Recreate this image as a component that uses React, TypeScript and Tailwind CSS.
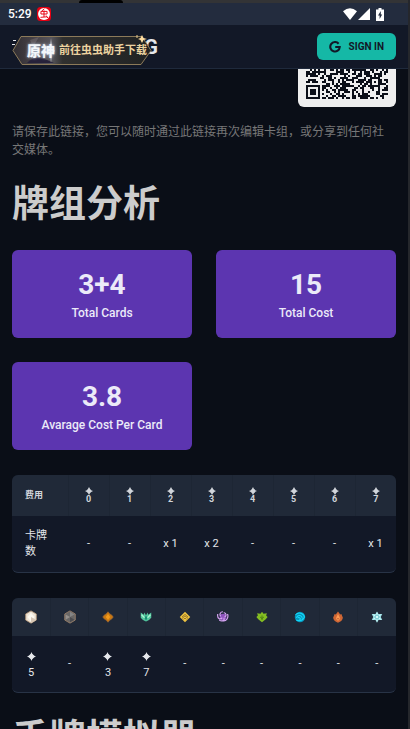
import React from "react";

const MODULES = 41;

function qrDark(x: number, y: number): boolean {
  const fy = y - 34;
  if (x < 8 && y >= 33) {
    if (x === 7 || fy < 0) return false;
    const edge = x === 0 || x === 6 || fy === 0 || fy === 6;
    const core = x >= 2 && x <= 4 && fy >= 2 && fy <= 4;
    return edge || core;
  }
  const ax = Math.abs(x - 34);
  const ay = Math.abs(y - 34);
  if (ay > 4 && y > 38 && x > 38) return false;
  if (Math.abs(x - 34) <= 2 && Math.abs(y - 32) <= 2) return Math.max(ax, Math.abs(y - 32)) !== 1;
  const n = Math.sin(x * 12.9898 + y * 78.233) * 43758.5453;
  return n - Math.floor(n) > 0.48;
}

function QrCode() {
  let d = "";
  for (let y = 0; y < MODULES; y++) {
    for (let x = 0; x < MODULES; x++) {
      if (qrDark(x, y)) d += `M${x} ${y}h1v1h-1z`;
    }
  }
  return (
    <svg viewBox="0 0 41 41" className="size-[82px]" shapeRendering="crispEdges" role="img" aria-label="QR">
      <path d={d} fill="#0b0f18" />
    </svg>
  );
}

function Star({ className }: { className: string }) {
  return (
    <svg viewBox="0 0 16 16" className={className} fill="currentColor" aria-hidden="true">
      <path d="M8 0Q9.500 6 16 8Q9.500 10 8 16Q6.500 10 0 8Q6.500 6 8 0Z" />
      <circle cx="8" cy="8" r="4" />
    </svg>
  );
}

function StatusBar() {
  return (
    <div className="flex h-[22px] shrink-0 items-center justify-between bg-[#232c3e] pl-2 pr-6">
      <div className="flex items-center gap-1">
        <span className="text-[12px] leading-5 font-medium text-white">5:29</span>
        <svg viewBox="0 0 16 16" className="ml-px size-[14px]" aria-hidden="true">
          <rect width="16" height="16" rx="4" fill="#e60012" />
          <circle cx="8" cy="8" r="6.800" fill="#fff" />
          <path d="M8.500 2L5.500 4.500M4.500 5h7v3h-7zM8 4v7.500M4 11.800l7.500-.6M10.500 9.800l2 3" stroke="#e60012" strokeWidth="1.100" fill="none" />
        </svg>
      </div>
      <div className="flex items-center text-white">
        <svg viewBox="0 0 14 12" className="h-3 w-[14px]" fill="currentColor" aria-hidden="true">
          <path d="M0 3.200Q7-2.800 14 3.200L7 12Z" />
        </svg>
        <svg viewBox="0 0 12 12" className="ml-px size-3" fill="currentColor" aria-hidden="true">
          <path d="M12 0V12H0Z" />
        </svg>
        <svg viewBox="0 0 8 13" className="ml-[6px] h-[13px] w-2" aria-hidden="true">
          <path d="M2.500 0h3v1.500H8V13H0V1.500h2.500z" fill="currentColor" />
          <path d="M4.800 3L2 7.600h1.600V11L6.200 6.500H4.800z" fill="#232c3e" />
        </svg>
      </div>
    </div>
  );
}

function PromoBadge() {
  return (
    <button
      type="button"
      className="absolute top-[10px] left-3 flex h-[31px] w-[140px] items-center pl-[15px] text-left"
    >
      <svg viewBox="0 0 140 31" className="absolute inset-0 h-[31px] w-[140px]" aria-hidden="true">
        <defs>
          <linearGradient id="plate" x1="0" y1="0" x2="1" y2="0">
            <stop offset="0" stopColor="#302d32" />
            <stop offset=".15" stopColor="#474247" />
            <stop offset=".28" stopColor="#57555b" />
            <stop offset=".36" stopColor="#30302f" />
            <stop offset="1" stopColor="#202223" />
          </linearGradient>
        </defs>
        <path d="M9 1.500H130L139 15.500L129 29.500H10L1 15.500Z" fill="url(#plate)" stroke="#8c7a59" />
        <path d="M15 28Q22 20 35 25L42 28Z" fill="#26213a" />
        <path d="M18 5L27 2L21 12Z" fill="#777073" opacity=".5" />
        <path d="M39 3L40 13L43 16L40 18L39 28L38 18L35 16L38 13Z" fill="#e8edf4" opacity=".8" />
        <path d="M130 0L131.500 3L135 4L131.500 5L130 8L128.500 5L126 4L128.500 3Z" fill="#ffdda0" />
        <path d="M125 0v3" stroke="#e7c98d" />
      </svg>
      <span className="relative whitespace-nowrap text-[14px] leading-5 font-black text-[#f3f6fa] [text-shadow:0_0_3px_#c5d5ed]">原神</span>
      <span className="relative ml-1 whitespace-nowrap text-[11px] leading-5 font-bold text-[#ecd3a0]">前往虫虫助手下载</span>
    </button>
  );
}

function Header() {
  return (
    <header className="relative flex h-11 shrink-0 items-center justify-between border-b border-[#1f2a3c] bg-[#121827] px-3">
      <div className="flex w-[146px] items-center justify-between text-[20px] leading-6 font-bold text-[#e5e7eb]">
        <svg viewBox="0 0 4 6" className="mb-2 h-[6px] w-1" fill="currentColor" aria-hidden="true">
          <path d="M1 0h3v1H1zM0 4h3v1H0z" />
        </svg>
        G
      </div>
      <PromoBadge />
      <button
        type="button"
        className="flex h-[27px] items-center gap-2 rounded-md bg-[#15b8a6] px-3 text-[10px] font-bold text-[#121827]"
      >
        <svg viewBox="0 0 16 16" className="size-3" fill="none" stroke="currentColor" strokeWidth="2.800" aria-hidden="true">
          <path d="M12.800 3.600A6.300 6.300 0 1 0 14.300 8H8.300" />
        </svg>
        SIGN IN
      </button>
    </header>
  );
}

function StatCard({ value, label }: { value: string; label: string }) {
  return (
    <div className="flex h-[88px] flex-col items-center justify-center rounded-md bg-[#5c35b0] pt-1.5 text-[#ebeaf8]">
      <div className="text-[28px] leading-8 font-bold">{value}</div>
      <div className="text-[12px] leading-6 font-medium">{label}</div>
    </div>
  );
}

const costs = ["-", "-", "x 1", "x 2", "-", "-", "-", "x 1"];

function CostTable() {
  return (
    <div className="mt-[25px] overflow-hidden rounded-md border-b border-[#283346] bg-[#121827]">
      <table className="w-full table-fixed border-collapse text-center">
        <thead className="bg-[#202938] text-[#d1d5db]">
          <tr className="h-[41px]">
            <th scope="col" className="w-[56px] border-r border-[#1d2634] pl-[13px] text-left text-[9px] font-bold">费用</th>
            {costs.map((_, i) => (
              <th key={i} scope="col" className="border-r border-[#1d2634] text-[9px] leading-[9px] font-bold last:border-r-0">
                <Star className="mx-auto size-2" />
                {i}
              </th>
            ))}
          </tr>
        </thead>
        <tbody>
          <tr className="h-14 text-[11px] leading-4 text-[#e5e7eb]">
            <th scope="row" className="pr-4 pl-[13px] text-left font-normal">卡牌数</th>
            {costs.map((c, i) => (
              <td key={i}>{c}</td>
            ))}
          </tr>
        </tbody>
      </table>
    </div>
  );
}

const elements: { name: string; art: React.ReactNode; count?: number }[] = [
  {
    name: "Omni",
    count: 5,
    art: (
      <>
        <path d="M8 1L14 4.500V11.500L8 15L2 11.500V4.500Z" fill="#eee5d8" stroke="#b99b7c" />
        <path d="M8 3L12 8L8 13L4 8Z" fill="#fcf8ef" />
        <path d="M8 8L14 11.500L8 15Z" fill="#d6c6b5" />
      </>
    ),
  },
  {
    name: "Unaligned",
    art: (
      <>
        <path d="M8 1L14 4.500V11.500L8 15L2 11.500V4.500Z" fill="#696766" stroke="#9a8069" />
        <path d="M8 8L3 5V11Z" fill="#96918c" />
        <path d="M8 8L13 5L8 2Z" fill="#858585" />
        <path d="M8 8V14L13 11Z" fill="#4b4c50" />
      </>
    ),
  },
  {
    name: "Matching",
    count: 3,
    art: (
      <>
        <path d="M8 1L10.500 4L12.500 5L15 8L12.500 11L10.500 12L8 15L5.500 12L3.500 11L1 8L3.500 5L5.500 4Z" fill="#c97912" stroke="#9a6334" />
        <path d="M8 4L11 8L8 12L5 8Z" fill="#f29a1b" />
      </>
    ),
  },
  {
    name: "Anemo",
    count: 7,
    art: (
      <>
        <path d="M1 2L5 5L6 2L8 6L10 2L11 5L15 2L15 9L12 12L8 14L4 12L1 9Z" fill="#56c9a0" />
        <path d="M8 6L10 9L8 13L6 9Z" fill="#178e72" />
        <path d="M2 5L6 9M14 5L10 9" stroke="#b0f7d3" strokeWidth="1.500" />
      </>
    ),
  },
  {
    name: "Geo",
    art: (
      <>
        <path d="M8 1L15 8L8 15L1 8Z" fill="#efc441" />
        <path d="M4 8L8 4.500L12 8M4 10L8 6.500L12 10M6 11L8 9.500L10 11" fill="none" stroke="#81621f" />
      </>
    ),
  },
  {
    name: "Electro",
    art: (
      <>
        <circle cx="8" cy="8" r="4.500" fill="#8e54bd" />
        <path d="M8 1C4 1 3 5 5 7M14 4C16 9 12 14 8 13M3 12C7 15 11 12 9 9M9 2C13 3 13 7 10 8M1 4C0 10 4 12 7 9" fill="none" stroke="#d4a2f1" strokeWidth="1.600" />
      </>
    ),
  },
  {
    name: "Dendro",
    art: (
      <>
        <path d="M8 1L10 3.500L14.500 3L13.500 6L15.500 8L13 11L8 15L3 11L.5 8L2.500 6L1.500 3L6 3.500Z" fill="#84bd22" />
        <path d="M8 6V12M5.500 8L8 10L10.500 8" stroke="#45780f" fill="none" strokeWidth="1.200" />
      </>
    ),
  },
  {
    name: "Hydro",
    art: (
      <>
        <circle cx="8" cy="8" r="7" fill="#0695bb" />
        <path d="M2 5C7 0 14 4 14 9M3 9C6 4 11 6 11 10M3 12C7 14 12 13 13 9M5 9C8 8 10 11 7 12" fill="none" stroke="#15dafa" strokeWidth="1.400" />
      </>
    ),
  },
  {
    name: "Pyro",
    art: (
      <>
        <path d="M8 .5L11 4.500L12.500 4L14.500 9Q14 13.500 8 15.500Q2 13.500 1.500 9L3.500 4L5 4.500Z" fill="#cf6735" />
        <path d="M8 4L10 8L11 11L8 13L5 11L6 8Z" fill="#ff9b52" />
        <path d="M6 11Q8 9 10 11" fill="none" stroke="#b04d2b" />
      </>
    ),
  },
  {
    name: "Cryo",
    art: (
      <>
        <path d="M8 .5L10 4L15 4L13 8L15 12H10L8 15.500L6 12H1L3 8L1 4H6Z" fill="#9be0e6" />
        <path d="M8 2V14M3 5L13 11M13 5L3 11" stroke="#e2ffff" />
        <circle cx="8" cy="8" r="2.500" fill="none" stroke="#62b7c1" />
      </>
    ),
  },
];

function ElementTable() {
  return (
    <div className="mt-[25px] overflow-hidden rounded-md border-b border-[#283346] bg-[#121827]">
      <table className="w-full table-fixed border-collapse text-center">
        <thead className="bg-[#202938]">
          <tr className="h-[38px]">
            {elements.map((e) => (
              <th key={e.name} scope="col" className="border-r border-[#1d2634] last:border-r-0">
                <svg
                  viewBox="0 0 16 16"
                  className={e.name === "Omni" || e.name === "Unaligned" ? "mx-auto size-[14px]" : "mx-auto size-3"}
                  role="img"
                  aria-label={e.name}
                >
                  {e.art}
                </svg>
              </th>
            ))}
          </tr>
        </thead>
        <tbody>
          <tr className="h-14 text-[11px] leading-4 text-[#e5e7eb]">
            {elements.map((e) => (
              <td key={e.name}>
                {e.count ? (
                  <>
                    <Star className="mx-auto mt-1 mb-1 size-[9px]" />
                    {e.count}
                  </>
                ) : (
                  "-"
                )}
              </td>
            ))}
          </tr>
        </tbody>
      </table>
    </div>
  );
}

export default function App() {
  return (
    <div className="flex h-screen flex-col overflow-hidden border-r-2 border-[#25272c] bg-[#0a0e17] font-[Roboto,'Noto_Sans_CJK_SC',sans-serif]">
      <div className="flex h-[3px] shrink-0 justify-center bg-[#333436] pr-[206px]">
        <div className="h-[3px] w-11 rounded-t-full bg-black" />
      </div>
      <StatusBar />
      <Header />
      <main className="min-h-0 flex-1 overflow-hidden px-3">
        <div className="flex h-[38px] items-end justify-end overflow-hidden">
          <div className="rounded-md bg-[#eeeeee] p-2">
            <QrCode />
          </div>
        </div>
        <p className="mt-4 pr-1 text-[12px] leading-[18px] text-[#777777]">
          请保存此链接，您可以随时通过此链接再次编辑卡组，或分享到任何社交媒体。
        </p>
        <h1 className="mt-[26px] text-[37px] leading-10 font-bold text-[#cccccc]">牌组分析</h1>
        <section className="mt-[25px] grid grid-cols-2 gap-6">
          <StatCard value="3+4" label="Total Cards" />
          <StatCard value="15" label="Total Cost" />
          <StatCard value="3.8" label="Avarage Cost Per Card" />
        </section>
        <CostTable />
        <ElementTable />
        <h1 className="mt-[26px] text-[37px] leading-10 font-bold text-[#cccccc]">手牌模拟器</h1>
      </main>
    </div>
  );
}
